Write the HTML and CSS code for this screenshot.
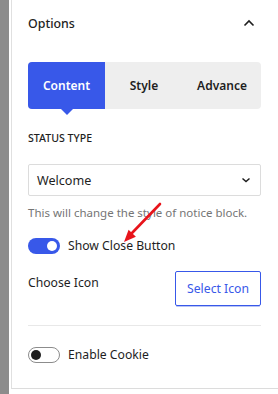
FILE: index.html
```html
<!DOCTYPE html>
<html lang="en">
<head>
  <meta charset="UTF-8">
  <meta name="viewport" content="width=device-width, initial-scale=1.0">
  <title>Options</title>
  <link rel="stylesheet" href="styles.css">
</head>
<body>

  <div class="borda-editor"></div>

  <div class="painel">
    <div class="painel-topo">
      <span class="painel-titulo">Options</span>
      <svg class="seta-topo" width="12" height="8" viewBox="0 0 12 8">
        <path d="M1.5 6.5 L6 2 L10.5 6.5" fill="none" stroke="#1e1e1e" stroke-width="1.6"/>
      </svg>
    </div>

    <div class="abas">
      <button class="aba ativa">Content</button>
      <button class="aba">Style</button>
      <button class="aba">Advance</button>
    </div>

    <div class="campo">
      <label class="rotulo" for="status">STATUS TYPE</label>
      <div class="selecao">
        <span>Welcome</span>
        <svg width="10" height="6" viewBox="0 0 10 6">
          <path d="M1.5 1.5 L5 4.5 L8.5 1.5" fill="none" stroke="#1e1e1e" stroke-width="1.5"/>
        </svg>
      </div>
      <p class="ajuda">This will change the style of notice block.</p>
    </div>

    <div class="linha-toggle">
      <span class="toggle ligado"><span class="bolinha"></span></span>
      <span>Show Close Button</span>
      <svg class="seta-vermelha" width="50" height="50" viewBox="0 0 50 50">
        <line x1="42" y1="7" x2="14" y2="36" stroke="#e8141b" stroke-width="2.6" stroke-linecap="round"/>
        <polygon points="6,45 10.6,32.8 17.9,39.7" fill="#e8141b"/>
      </svg>
    </div>

    <div class="linha-icone">
      <span>Choose Icon</span>
      <button class="botao-icone">Select Icon</button>
    </div>

    <div class="linha-toggle desligada">
      <span class="toggle"><span class="bolinha"></span></span>
      <span>Enable Cookie</span>
    </div>
  </div>

</body>
</html>
```

FILE: styles.css
```css
body {
  font-family: "Noto Sans", "Open Sans", sans-serif;
  font-size: 12.2px;
  color: #1e1e1e;
  background-color: #fff;
  margin: 0;
  display: flex;
  height: 394px;
  overflow: hidden;
}

.borda-editor {
  width: 9px;
  background-color: #8c8c8c;
  flex-shrink: 0;
}

.painel {
  margin-left: 2px;
  flex: 1;
  height: 389px;
  border-left: 1px solid #e0e0e0;
  border-bottom: 1px solid #dcdcdc;
  padding: 0 17px 0 16px;
  box-sizing: border-box;
}

.painel-topo {
  height: 46px;
  display: flex;
  align-items: center;
  justify-content: space-between;
}

.painel-titulo {
  font-size: 12.4px;
  font-weight: 500;
}

.seta-topo {
  margin-right: 6px;
}

/* Abas */
.abas {
  margin-top: 16px;
  display: flex;
  height: 47px;
  background-color: #eeeeee;
  border-radius: 4px;
}

.aba {
  flex: 1;
  border: none;
  background: none;
  font-family: inherit;
  font-size: 12px;
  font-weight: 600;
  color: #1e1e1e;
  padding: 0;
  position: relative;
}

.aba.ativa {
  flex: 0 0 77px;
  background-color: #3858e9;
  color: #fff;
  border-radius: 4px 0 0 4px;
}

.aba.ativa::after {
  content: "";
  position: absolute;
  left: 50%;
  bottom: -6px;
  margin-left: -6px;
  border-left: 6px solid transparent;
  border-right: 6px solid transparent;
  border-top: 6px solid #3858e9;
}

/* Campo status */
.campo {
  margin-top: 21px;
}

.rotulo {
  display: block;
  font-size: 10.6px;
  font-weight: 500;
  line-height: 16px;
}

.selecao {
  margin-top: 18px;
  height: 32px;
  border: 1px solid #dcdcdc;
  border-radius: 2px;
  box-sizing: border-box;
  display: flex;
  align-items: center;
  justify-content: space-between;
  padding: 0 9px 0 8px;
  font-size: 12.6px;
}

.ajuda {
  margin: 9px 0 0;
  font-size: 11.5px;
  line-height: 16px;
  color: #757575;
}

/* Toggles */
.linha-toggle {
  display: flex;
  align-items: center;
  gap: 8px;
  margin-top: 16px;
  position: relative;
}

.toggle {
  width: 32px;
  height: 16px;
  border-radius: 8px;
  background-color: #3858e9;
  box-sizing: border-box;
  position: relative;
  flex-shrink: 0;
}

.toggle .bolinha {
  position: absolute;
  top: 3px;
  right: 3px;
  width: 10px;
  height: 10px;
  border-radius: 50%;
  background-color: #fff;
}

.desligada {
  margin-top: 20px;
}

.desligada .toggle {
  background-color: #fff;
  border: 1px solid #8c8c8c;
}

.desligada .bolinha {
  top: 2px;
  left: 2px;
  right: auto;
  background-color: #1e1e1e;
}

.seta-vermelha {
  position: absolute;
  left: 90px;
  top: -40px;
}

/* Icone */
.linha-icone {
  margin-top: 17px;
  padding-bottom: 19px;
  border-bottom: 1px solid #e8e8e8;
  display: flex;
  justify-content: space-between;
  align-items: flex-start;
}

.linha-icone span {
  margin-top: 3px;
}

.botao-icone {
  width: 86px;
  height: 35px;
  background-color: #fff;
  border: 1px solid #3858e9;
  border-radius: 2px;
  color: #3858e9;
  font-family: inherit;
  font-size: 12.2px;
  box-shadow: 0 2px 0 -1px #b8c4f5;
}
```
